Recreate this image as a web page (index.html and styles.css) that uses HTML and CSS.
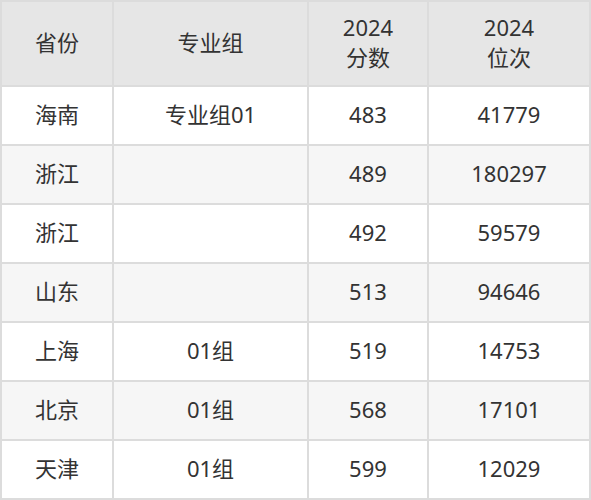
FILE: index.html
```html
<!DOCTYPE html>
<html lang="zh">
<head>
<meta charset="utf-8">
<link rel="stylesheet" href="styles.css">
</head>
<body>
<div class="table">
  <div class="cell head">省份</div>
  <div class="cell head">专业组</div>
  <div class="cell head">2024<br>分数</div>
  <div class="cell head">2024<br>位次</div>

  <div class="cell">海南</div>
  <div class="cell">专业组01</div>
  <div class="cell">483</div>
  <div class="cell">41779</div>

  <div class="cell alt">浙江</div>
  <div class="cell alt"></div>
  <div class="cell alt">489</div>
  <div class="cell alt">180297</div>

  <div class="cell">浙江</div>
  <div class="cell"></div>
  <div class="cell">492</div>
  <div class="cell">59579</div>

  <div class="cell alt">山东</div>
  <div class="cell alt"></div>
  <div class="cell alt">513</div>
  <div class="cell alt">94646</div>

  <div class="cell">上海</div>
  <div class="cell">01组</div>
  <div class="cell">519</div>
  <div class="cell">14753</div>

  <div class="cell alt">北京</div>
  <div class="cell alt">01组</div>
  <div class="cell alt">568</div>
  <div class="cell alt">17101</div>

  <div class="cell">天津</div>
  <div class="cell">01组</div>
  <div class="cell">599</div>
  <div class="cell">12029</div>
</div>
</body>
</html>
```

FILE: styles.css
```css
html, body {
  margin: 0;
  padding: 0;
  background: #ffffff;
}
.table {
  display: grid;
  grid-template-columns: 110px 193px 118px 160px;
  grid-template-rows: 83px repeat(7, 57px);
  gap: 2px;
  padding: 2px;
  width: 591px;
  height: 500px;
  box-sizing: border-box;
  background: #dcdcdc;
  font-family: "Noto Sans", "Noto Sans CJK SC", sans-serif;
  font-size: 22px;
  color: #333333;
}
.cell {
  background: #ffffff;
  display: flex;
  align-items: center;
  justify-content: center;
  text-align: center;
  line-height: 30px;
  padding-bottom: 3px;
  box-sizing: border-box;
}
.head {
  background: #e6e6e6;
}
.alt {
  background: #f6f6f6;
}
```
